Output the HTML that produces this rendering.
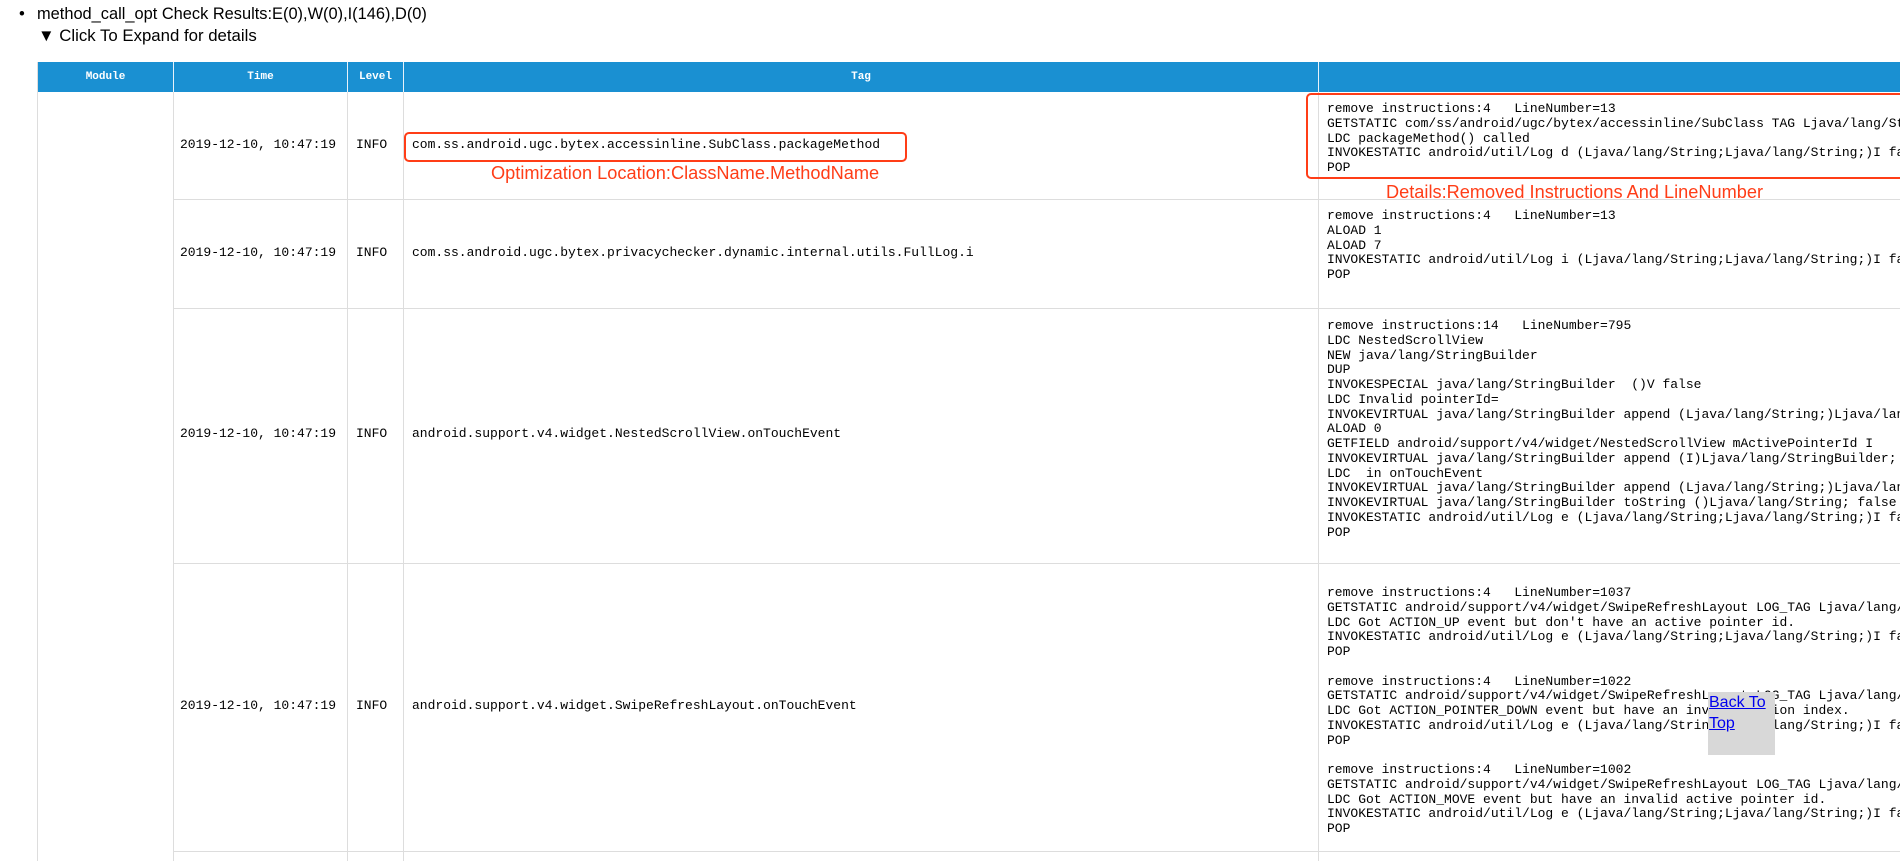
<!DOCTYPE html>
<html><head><meta charset="utf-8"><style>
html,body{margin:0;padding:0;background:#fff;width:1900px;height:861px;overflow:hidden}
#w{position:relative;width:1900px;height:861px;overflow:hidden}
.s{font-family:"Liberation Sans",Helvetica,Arial,sans-serif;position:absolute;white-space:nowrap;color:#000}
.m{font-family:"Liberation Mono","Courier New",monospace;font-size:13px;line-height:14.75px;position:absolute;white-space:pre;color:#000}
.v{position:absolute;width:1px;background:#ddd}
.h{position:absolute;height:1px;background:#ddd}
.hd{position:absolute;top:62px;height:30px;background:#1a90d2;color:#fff;font-family:"Liberation Mono",monospace;font-weight:bold;font-size:11px;line-height:30px;text-align:center}
.red{position:absolute;border:2.5px solid #ff3d17;border-radius:5px;box-sizing:border-box}
.rl{font-family:"Liberation Sans",Helvetica,Arial,sans-serif;position:absolute;white-space:nowrap;color:#ff3d17;font-size:18.2px}
</style></head><body><div id="w">
<div class="s" style="left:19px;top:4px;font-size:16.6px;line-height:20px">•</div>
<div class="s" style="left:37px;top:4px;font-size:16.4px;line-height:20px">method_call_opt Check Results:E(0),W(0),I(146),D(0)</div>
<div class="s" style="left:38px;top:26px;font-size:16.8px;line-height:20px">▼ Click To Expand for details</div>

<div class="hd" style="left:38px;width:135px">Module</div>
<div class="hd" style="left:174px;width:173px">Time</div>
<div class="hd" style="left:348px;width:55px">Level</div>
<div class="hd" style="left:404px;width:914px">Tag</div>
<div class="hd" style="left:1319px;width:581px"></div>
<div style="position:absolute;left:173px;top:62px;width:1px;height:30px;background:#e8f2fa"></div>
<div style="position:absolute;left:347px;top:62px;width:1px;height:30px;background:#e8f2fa"></div>
<div style="position:absolute;left:403px;top:62px;width:1px;height:30px;background:#e8f2fa"></div>
<div style="position:absolute;left:1318px;top:62px;width:1px;height:30px;background:#e8f2fa"></div>

<div class="v" style="left:37px;top:62px;height:799px"></div>
<div class="v" style="left:173px;top:92px;height:769px"></div>
<div class="v" style="left:347px;top:92px;height:769px"></div>
<div class="v" style="left:403px;top:92px;height:769px"></div>
<div class="v" style="left:1318px;top:92px;height:769px"></div>
<div class="h" style="left:173px;top:199px;width:1727px"></div>
<div class="h" style="left:173px;top:308px;width:1727px"></div>
<div class="h" style="left:173px;top:563px;width:1727px"></div>
<div class="h" style="left:173px;top:851px;width:1727px"></div>

<div class="m" style="left:180px;top:138px">2019-12-10, 10:47:19</div>
<div class="m" style="left:356px;top:138px">INFO</div>
<div class="m" style="left:412px;top:138px">com.ss.android.ugc.bytex.accessinline.SubClass.packageMethod</div>
<div class="m" style="left:180px;top:246px">2019-12-10, 10:47:19</div>
<div class="m" style="left:356px;top:246px">INFO</div>
<div class="m" style="left:412px;top:246px">com.ss.android.ugc.bytex.privacychecker.dynamic.internal.utils.FullLog.i</div>
<div class="m" style="left:180px;top:427px">2019-12-10, 10:47:19</div>
<div class="m" style="left:356px;top:427px">INFO</div>
<div class="m" style="left:412px;top:427px">android.support.v4.widget.NestedScrollView.onTouchEvent</div>
<div class="m" style="left:180px;top:699px">2019-12-10, 10:47:19</div>
<div class="m" style="left:356px;top:699px">INFO</div>
<div class="m" style="left:412px;top:699px">android.support.v4.widget.SwipeRefreshLayout.onTouchEvent</div>

<div class="m" style="left:1327px;top:102px">remove instructions:4   LineNumber=13
GETSTATIC com/ss/android/ugc/bytex/accessinline/SubClass TAG Ljava/lang/String;
LDC packageMethod() called
INVOKESTATIC android/util/Log d (Ljava/lang/String;Ljava/lang/String;)I false
POP</div>
<div class="m" style="left:1327px;top:209px">remove instructions:4   LineNumber=13
ALOAD 1
ALOAD 7
INVOKESTATIC android/util/Log i (Ljava/lang/String;Ljava/lang/String;)I false
POP</div>
<div class="m" style="left:1327px;top:319px">remove instructions:14   LineNumber=795
LDC NestedScrollView
NEW java/lang/StringBuilder
DUP
INVOKESPECIAL java/lang/StringBuilder  ()V false
LDC Invalid pointerId=
INVOKEVIRTUAL java/lang/StringBuilder append (Ljava/lang/String;)Ljava/lang/StringBuilder;
ALOAD 0
GETFIELD android/support/v4/widget/NestedScrollView mActivePointerId I
INVOKEVIRTUAL java/lang/StringBuilder append (I)Ljava/lang/StringBuilder; false
LDC  in onTouchEvent
INVOKEVIRTUAL java/lang/StringBuilder append (Ljava/lang/String;)Ljava/lang/StringBuilder;
INVOKEVIRTUAL java/lang/StringBuilder toString ()Ljava/lang/String; false
INVOKESTATIC android/util/Log e (Ljava/lang/String;Ljava/lang/String;)I false
POP</div>
<div class="m" style="left:1327px;top:586px">remove instructions:4   LineNumber=1037
GETSTATIC android/support/v4/widget/SwipeRefreshLayout LOG_TAG Ljava/lang/String;
LDC Got ACTION_UP event but don't have an active pointer id.
INVOKESTATIC android/util/Log e (Ljava/lang/String;Ljava/lang/String;)I false
POP

remove instructions:4   LineNumber=1022
GETSTATIC android/support/v4/widget/SwipeRefreshLayout LOG_TAG Ljava/lang/String;
LDC Got ACTION_POINTER_DOWN event but have an invalid action index.
INVOKESTATIC android/util/Log e (Ljava/lang/String;Ljava/lang/String;)I false
POP

remove instructions:4   LineNumber=1002
GETSTATIC android/support/v4/widget/SwipeRefreshLayout LOG_TAG Ljava/lang/String;
LDC Got ACTION_MOVE event but have an invalid active pointer id.
INVOKESTATIC android/util/Log e (Ljava/lang/String;Ljava/lang/String;)I false
POP</div>

<div class="red" style="left:404px;top:132px;width:503px;height:30px"></div>
<div class="rl" style="left:491px;top:163px">Optimization Location:ClassName.MethodName</div>
<div class="red" style="left:1306px;top:93px;width:620px;height:86px"></div>
<div class="rl" style="left:1386px;top:182px">Details:Removed Instructions And LineNumber</div>

<div style="position:absolute;left:1708px;top:692px;width:67px;height:63px;background:#d8d8d8"></div>
<div class="s" style="left:1709px;top:692px;font-size:16px;line-height:21px;color:#00e;text-decoration:underline;white-space:normal;width:70px">Back To Top</div>
</div></body></html>
